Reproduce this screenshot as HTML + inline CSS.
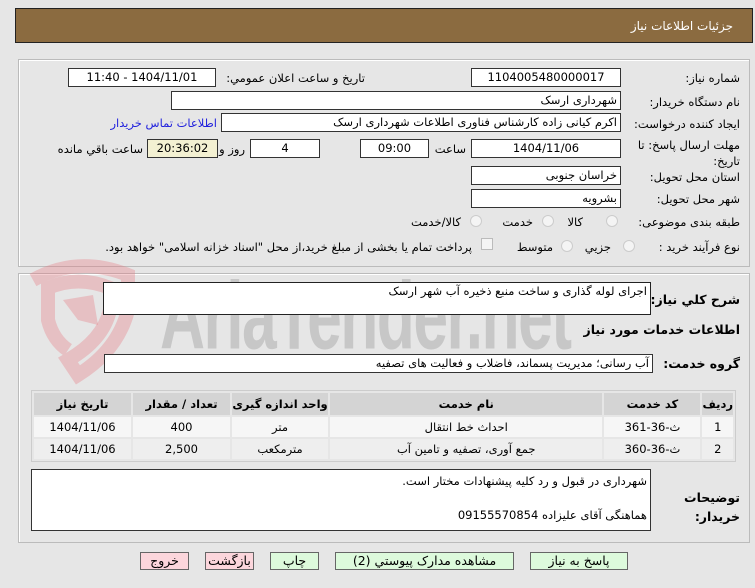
<!DOCTYPE html>
<html><head><meta charset="utf-8"><style>
*{box-sizing:border-box;margin:0;padding:0}
body{width:755px;height:588px;background:#e6e6e6;font-family:"DejaVu Sans",sans-serif;font-size:11.5px;color:#000;position:relative;overflow:hidden}
.a{position:absolute}
.in{position:absolute;background:#fff;border:1px solid #333;direction:rtl;padding:1px 3px;white-space:nowrap;line-height:15px}
.c{text-align:center}
.l{position:absolute;direction:rtl;white-space:nowrap;text-align:right}
.panel{position:absolute;border:1px solid #bbb;background:#e6e6e6;box-shadow:1px 1px 0 #fff inset}
.radio{position:absolute;width:12px;height:12px;border-radius:50%;border:1px solid #ccc;background:#f4f4f4}
.btn{position:absolute;height:18px;border:1px solid #666;text-align:center;line-height:16px;font-size:12.5px;direction:rtl}
table{border-collapse:separate;border-spacing:2px;width:100%}
td{text-align:center;height:20px;font-size:11.5px;padding:0}
th{background:#d4d4d4;height:22px;font-size:11.5px;padding:0}
tr.r td{background:#f6f6f6}
tr.r2 td{background:#eeeeee}
</style></head><body>
<div class="a" style="left:15px;top:8px;width:738px;height:35px;background:#8b6b40;border:1px solid #222"></div>
<div class="l" style="right:22px;top:19px;color:#fff;font-size:12px">جزئيات اطلاعات نياز</div>

<div class="panel" style="left:18px;top:59px;width:732px;height:208px"></div>
<div class="l" style="right:15px;top:71px">شماره نياز:</div>
<div class="in c" style="left:471px;top:68px;width:150px">1104005480000017</div>
<div class="l" style="right:390px;top:71px">تاريخ و ساعت اعلان عمومي:</div>
<div class="in c" style="left:68px;top:68px;width:148px">1404/11/01 - 11:40</div>

<div class="l" style="right:15px;top:95px">نام دستگاه خريدار:</div>
<div class="in" style="left:171px;top:91px;width:450px">شهرداری ارسک</div>

<div class="l" style="right:15px;top:117px">ايجاد کننده درخواست:</div>
<div class="in" style="left:221px;top:113px;width:400px">اکرم کیانی زاده کارشناس فناوری اطلاعات شهرداری ارسک</div>
<div class="l" style="right:538px;top:116px;color:#2222dd">اطلاعات تماس خريدار</div>

<div class="l" style="right:15px;top:137px;line-height:16px">مهلت ارسال پاسخ: تا<br>تاريخ:</div>
<div class="in c" style="left:471px;top:139px;width:150px">1404/11/06</div>
<div class="l" style="right:289px;top:142px">ساعت</div>
<div class="in c" style="left:360px;top:139px;width:69px">09:00</div>
<div class="in c" style="left:250px;top:139px;width:70px">4</div>
<div class="l" style="right:510px;top:142px">روز و</div>
<div class="in c" style="left:147px;top:139px;width:71px;background:#f3f0d2">20:36:02</div>
<div class="l" style="right:612px;top:142px">ساعت باقي مانده</div>

<div class="l" style="right:15px;top:170px">استان محل تحويل:</div>
<div class="in" style="left:471px;top:166px;width:150px">خراسان جنوبی</div>
<div class="l" style="right:15px;top:192px">شهر محل تحويل:</div>
<div class="in" style="left:471px;top:189px;width:150px">بشرويه</div>

<div class="l" style="right:15px;top:215px">طبقه بندی موضوعی:</div>
<div class="radio" style="left:606px;top:215px"></div><div class="l" style="right:172px;top:215px">کالا</div>
<div class="radio" style="left:542px;top:215px"></div><div class="l" style="right:222px;top:215px">خدمت</div>
<div class="radio" style="left:470px;top:215px"></div><div class="l" style="right:294px;top:215px">کالا/خدمت</div>

<div class="l" style="right:15px;top:240px">نوع فرآيند خريد :</div>
<div class="radio" style="left:623px;top:240px"></div><div class="l" style="right:144px;top:240px">جزيي</div>
<div class="radio" style="left:561px;top:240px"></div><div class="l" style="right:202px;top:240px">متوسط</div>
<div class="a" style="left:481px;top:238px;width:12px;height:12px;border:1px solid #bbb;background:#f4f4f4"></div>
<div class="l" style="right:283px;top:240px">پرداخت تمام يا بخشی از مبلغ خريد،از محل "اسناد خزانه اسلامی" خواهد بود.</div>

<div class="panel" style="left:18px;top:273px;width:732px;height:270px"></div>

<svg class="a" style="left:18px;top:250px" width="130" height="140" viewBox="0 0 130 140"><path d="M15 30 Q60 5 110 25 L110 60 Q100 100 60 125 L50 110 Q85 90 92 60 L92 38 Q60 25 30 38 L30 70 Q35 90 50 100" fill="none" stroke="rgba(230,120,130,.35)" stroke-width="14"/><path d="M45 50 L75 45 L80 75 L60 70 Z" fill="rgba(230,120,130,.35)"/></svg>
<div class="a" style="left:160px;top:262px;font-size:80px;line-height:90px;color:rgba(140,140,140,.35);font-family:'Liberation Sans',sans-serif;font-weight:bold;letter-spacing:-2px;white-space:nowrap;transform:scale(0.78,1.2);transform-origin:0 0">AriaTender.net</div>

<div class="l" style="right:15px;top:292px;font-weight:bold;font-size:12.5px">شرح کلي نياز:</div>
<div class="in" style="left:103px;top:282px;width:548px;height:33px;border-color:#222">اجرای لوله گذاری و ساخت منبع ذخيره آب شهر ارسک</div>
<div class="l" style="right:15px;top:322px;font-weight:bold;font-size:12.5px">اطلاعات خدمات مورد نياز</div>
<div class="l" style="right:15px;top:356px;font-weight:bold;font-size:12.5px">گروه خدمت:</div>
<div class="in" style="left:104px;top:354px;width:549px">آب رسانی؛ مديريت پسماند، فاضلاب و فعاليت های تصفيه</div>

<div class="a" style="left:31px;top:390px;width:705px;height:72px;border:1px solid #ccc;background:#e6e6e6;overflow:hidden">
<table dir="rtl"><tr><th style="width:26px">رديف</th><th style="width:96px">کد خدمت</th><th>نام خدمت</th><th style="width:96px">واحد اندازه گيری</th><th style="width:97px">تعداد / مقدار</th><th style="width:97px">تاريخ نياز</th></tr>
<tr class="r"><td>1</td><td>ث-36-361</td><td>احداث خط انتقال</td><td>متر</td><td>400</td><td>1404/11/06</td></tr>
<tr class="r2"><td>2</td><td>ث-36-360</td><td>جمع آوری، تصفيه و تامين آب</td><td>مترمکعب</td><td>2,500</td><td>1404/11/06</td></tr></table></div>

<div class="l" style="right:15px;top:488px;font-weight:bold;font-size:12.5px;line-height:19px">توضيحات<br>خريدار:</div>
<div class="in" style="left:31px;top:469px;width:620px;height:62px;white-space:normal;line-height:17px;padding-top:3px">شهرداری در قبول و رد کليه پيشنهادات مختار است.<br><br>هماهنگی آقای عليزاده 09155570854</div>

<div class="btn" style="left:140px;top:552px;width:49px;background:#fcd6dc">خروج</div>
<div class="btn" style="left:205px;top:552px;width:49px;background:#fcd6dc">بازگشت</div>
<div class="btn" style="left:270px;top:552px;width:49px;background:#ddfadc">چاپ</div>
<div class="btn" style="left:335px;top:552px;width:179px;background:#ddfadc">مشاهده مدارک پيوستي (2)</div>
<div class="btn" style="left:530px;top:552px;width:98px;background:#ddfadc">پاسخ به نياز</div>
</body></html>
